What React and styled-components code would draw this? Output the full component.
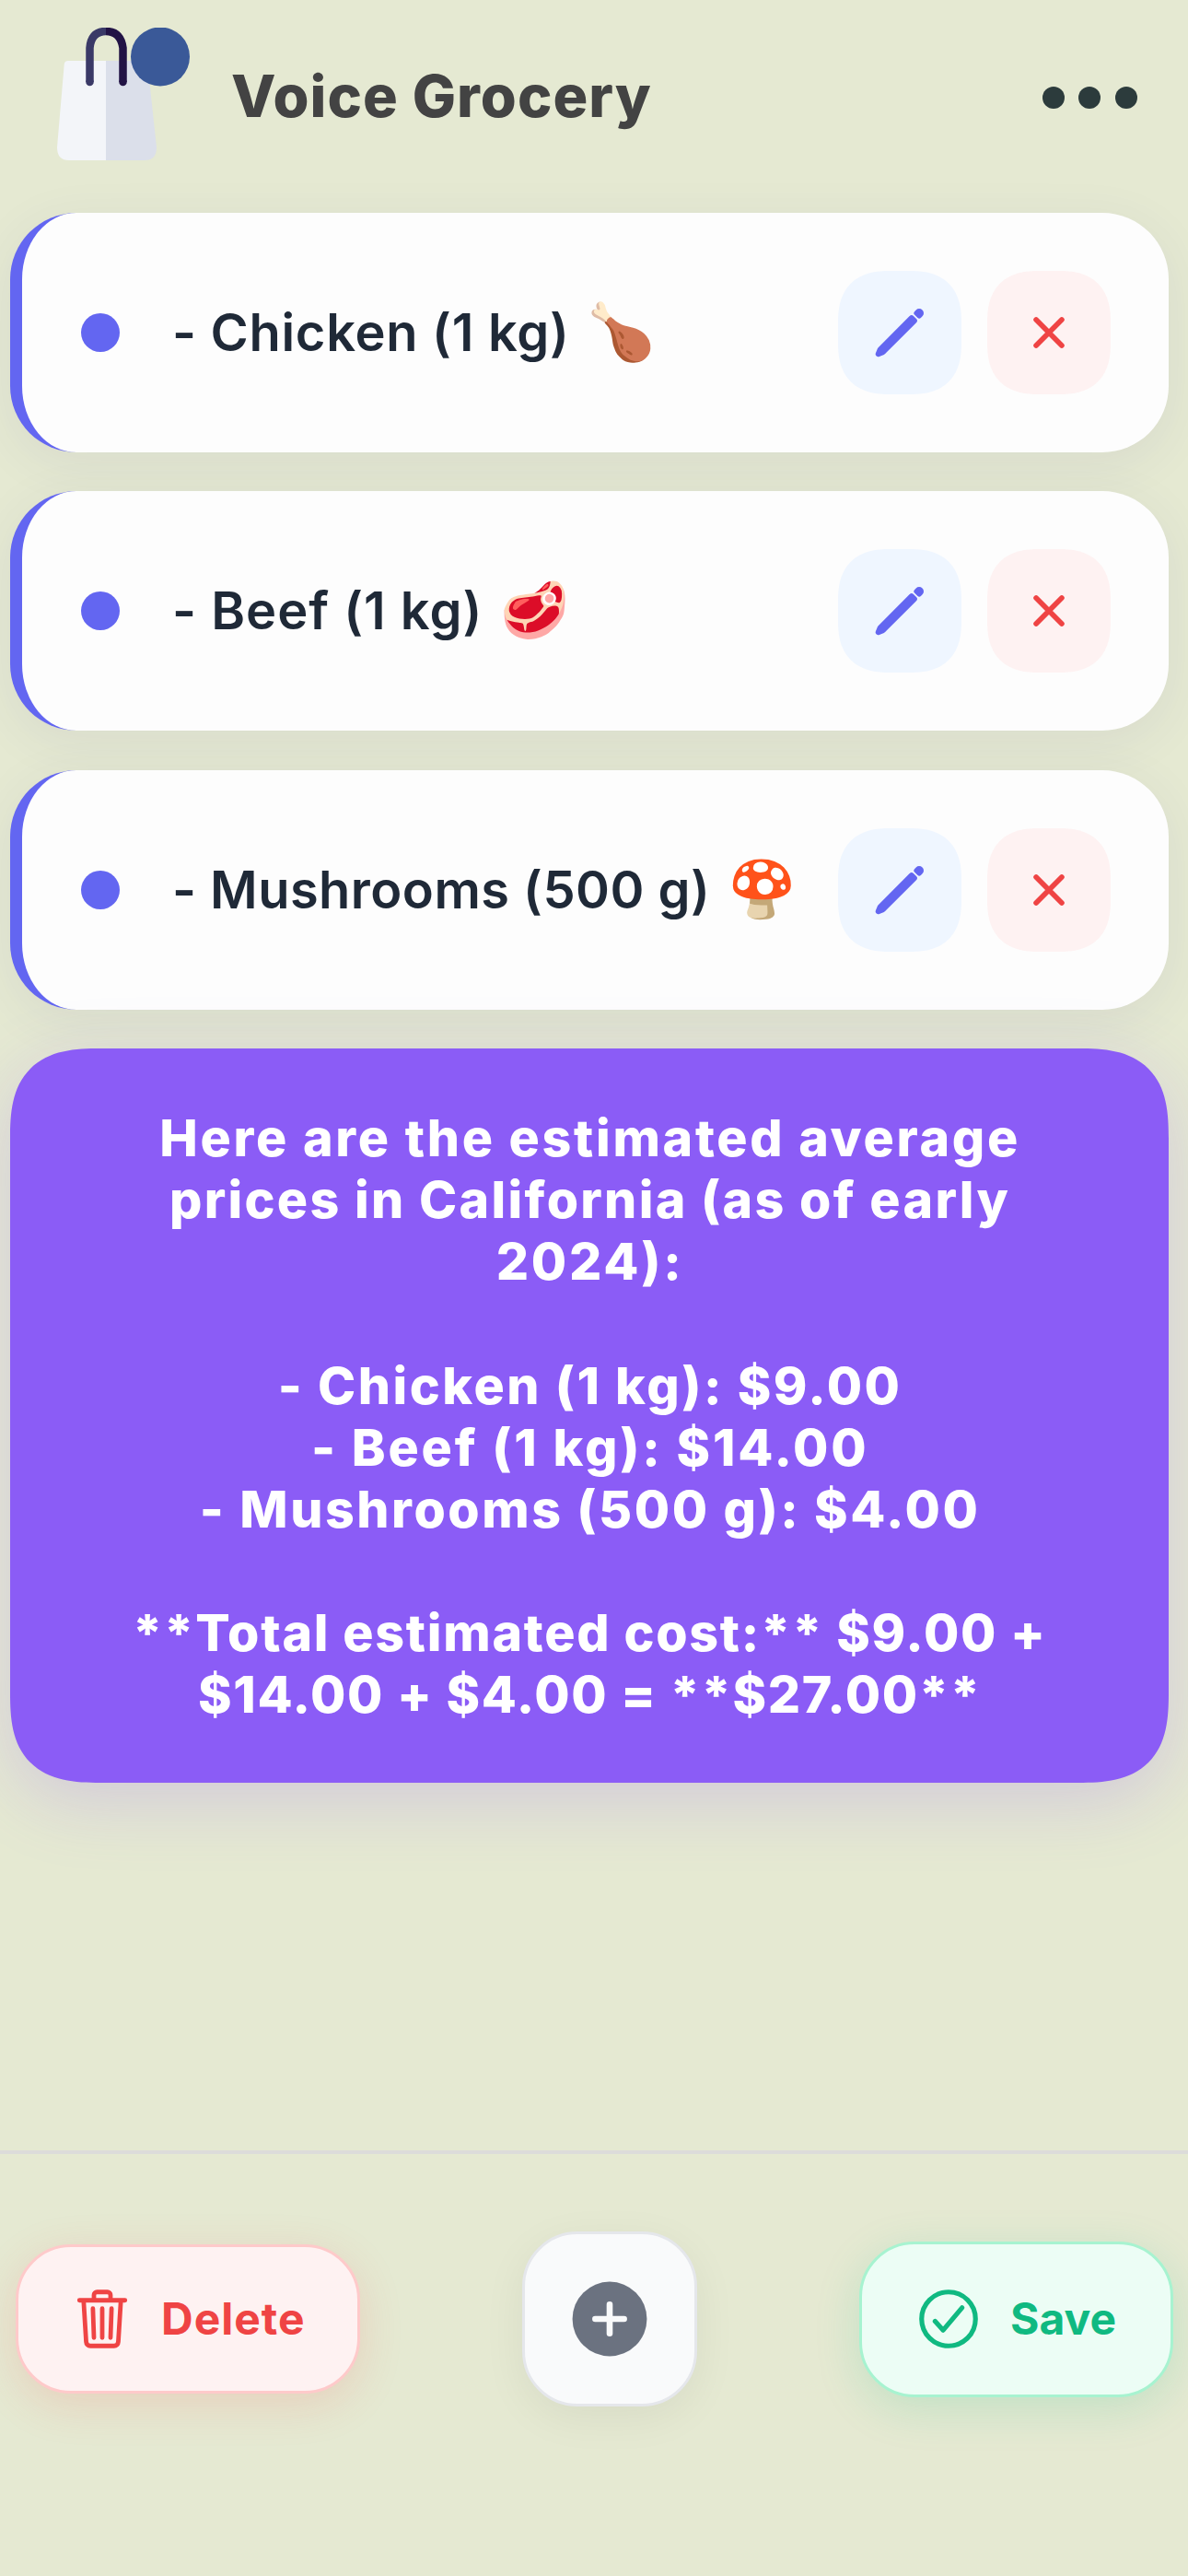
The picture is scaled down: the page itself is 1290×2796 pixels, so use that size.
import React from 'react';
import styled, { createGlobalStyle } from 'styled-components';

const GlobalStyle = createGlobalStyle`
  *, *::before, *::after { box-sizing: border-box; }
  body {
    margin: 0;
    background: #e5e9d2;
    font-family: Inter, "Liberation Sans", sans-serif;
  }
  button { font: inherit; margin: 0; }
  svg { display: block; flex: none; }
`;

const Screen = styled.div`
  display: flex;
  flex-direction: column;
  width: 1290px;
  height: 2796px;
  overflow: hidden;
  background: #e5e9d2;
`;

const Header = styled.header`
  display: flex;
  align-items: center;
  flex: none;
  height: 212px;
  padding: 0 55px 0 62px;
`;

const Logo = styled.svg`
  width: 146px;
  height: 146px;
  margin-bottom: 7px;
`;

const Title = styled.h1`
  margin: 0 auto 3px 43px;
  color: #434343;
  font-size: 63px;
  font-weight: 800;
  line-height: 1.2;
  letter-spacing: 1.05px;
`;

const MenuButton = styled.button`
  display: flex;
  gap: 15.6px;
  padding: 0;
  border: 0;
  background: none;
`;

const MenuDot = styled.span`
  width: 24px;
  height: 24px;
  border-radius: 50%;
  background: #2c3b3c;
`;

const Content = styled.main`
  flex: 1;
  display: flex;
  flex-direction: column;
  gap: 42.4px;
  padding: 19px 21px 0 11px;
`;

const ItemCard = styled.article`
  display: flex;
  align-items: center;
  flex: none;
  height: 260px;
  padding: 0 63px 0 64px;
  border-left: 13px solid #6366f1;
  border-radius: 72px;
  background: #fdfdfd;
  box-shadow: 0 12px 54px rgba(70, 70, 140, 0.08);
`;

const Bullet = styled.span`
  flex: none;
  width: 42px;
  height: 42px;
  border-radius: 50%;
  background: #6366f1;
`;

const ItemName = styled.span`
  flex: 1;
  display: flex;
  align-items: center;
  margin-left: 57px;
  color: #1f2937;
  font-size: 56px;
  font-weight: 600;
  line-height: 76px;
  letter-spacing: ${(p) => p.$tracking}px;
  white-space: pre;
`;

const Emoji = styled.span`
  margin-left: 19px;
  font-family: "Noto Color Emoji", sans-serif;
  font-size: 60px;
  font-weight: 400;
  letter-spacing: 0;
`;

const Actions = styled.div`
  display: flex;
  gap: 28px;
`;

const ActionButton = styled.button`
  display: flex;
  align-items: center;
  justify-content: center;
  width: 134px;
  height: 134px;
  padding: 0;
  border: 0;
  border-radius: 48px;
  color: ${(p) => (p.$danger ? '#ef4444' : '#6366f1')};
  background: ${(p) => (p.$danger ? '#fef2f2' : '#eff6ff')};

  @supports (corner-shape: superellipse(1.3)) {
    border-radius: 56px;
    corner-shape: superellipse(1.3);
  }
`;

const PriceCard = styled.section`
  flex: none;
  height: 797px;
  padding: 63px 0;
  border-radius: 74px;
  background: #8b5cf6;
  box-shadow: 0 20px 76px rgba(139, 92, 246, 0.22);
  color: #fff;
  font-size: 55.5px;
  font-weight: 800;
  line-height: 67.1px;
  text-align: center;
  white-space: pre;

  @supports (corner-shape: superellipse(1.3)) {
    border-radius: 98px;
    corner-shape: superellipse(1.45);
  }
`;

const PriceLine = styled.div`
  height: 67.1px;
  letter-spacing: ${(p) => p.$tracking}px;
  text-indent: ${(p) => p.$tracking / 2}px;
`;

const Footer = styled.footer`
  display: flex;
  align-items: center;
  justify-content: space-between;
  flex: none;
  height: 462px;
  padding: 0 16px 100px 17px;
  border-top: 4px solid #dcdcda;
`;

const tones = {
  red: { fg: '#ef4444', bg: '#fef2f2', line: '#fecaca', glow: 'rgba(239, 68, 68, 0.15)' },
  green: { fg: '#10b981', bg: '#ecfdf5', line: '#a7f3d0', glow: 'rgba(16, 185, 129, 0.17)' },
  gray: { fg: '#6b7280', bg: '#f9fafb', line: '#e5e7eb', glow: 'rgba(0, 0, 0, 0.06)' },
};

const FooterButton = styled.button`
  display: flex;
  align-items: center;
  justify-content: ${(p) => (p.$tone === 'gray' ? 'center' : 'flex-start')};
  gap: 28px;
  width: ${(p) => p.$width}px;
  height: ${(p) => p.$height}px;
  padding: 0 0 0 ${(p) => (p.$tone === 'gray' ? 0 : 55)}px;
  border: 3.5px solid ${(p) => tones[p.$tone].line};
  border-radius: 60px;
  background: ${(p) => tones[p.$tone].bg};
  color: ${(p) => tones[p.$tone].fg};
  box-shadow: 0 12px 48px ${(p) => tones[p.$tone].glow};
`;

const ButtonLabel = styled.span`
  margin-bottom: 1px;
  font-size: 48px;
  font-weight: 700;
  line-height: 58px;
  letter-spacing: ${(p) => p.$tracking || 0}px;
`;

const strokeProps = {
  fill: 'none',
  stroke: 'currentColor',
  strokeWidth: 34,
  strokeLinecap: 'round',
  strokeLinejoin: 'round',
};

const BagLogo = () => (
  <Logo viewBox="0 0 146 146" aria-hidden="true">
    <path d="M53 36H12q-4 0-4.300 4L0 130q0 14 13 14h40z" fill="#f3f5f9" />
    <path d="M53 36h41q4 0 4.300 4L108 130q0 14-13 14H53z" fill="#dbdfea" />
    <path d="M35.500 59V22Q37 4 53 4" fill="none" stroke="#3a3967" strokeWidth="8.500" />
    <path d="M53 4Q69 4 71.500 22V59" fill="none" stroke="#221345" strokeWidth="8.500" />
    <circle cx="35.500" cy="59" r="4.250" fill="#3a3967" />
    <circle cx="71.500" cy="59" r="4.250" fill="#221345" />
    <circle cx="112" cy="31.500" r="32" fill="#3a5998" />
  </Logo>
);

const PencilIcon = () => (
  <svg width="64" height="64" viewBox="0 0 512 512">
    <path
      d="M358.620 129.280L86.490 402.080 70 442l39.920-16.490 272.800-272.130z"
      fill="currentColor" stroke="currentColor" strokeWidth="48" strokeLinecap="round" strokeLinejoin="round"
    />
    <path
      d="M413.070 74.840l-11.790 11.780 24.100 24.100 11.790-11.790a16.510 16.510 0 000-23.340l-.75-.75a16.510 16.510 0 00-23.350 0z"
      fill="currentColor" stroke="currentColor" strokeWidth="44" strokeLinecap="round" strokeLinejoin="round"
    />
  </svg>
);

const CloseIcon = () => (
  <svg width="66" height="66" viewBox="0 0 512 512">
    <path d="M364 364L148 148M364 148L148 364" {...strokeProps} strokeWidth={44} />
  </svg>
);

const TrashIcon = () => (
  <svg width="72" height="72" viewBox="0 0 512 512">
    <path
      d="M112 112l20 320c.95 18.490 14.400 32 32 32h184c17.670 0 30.870-13.510 32-32l20-320M80 112h352M192 112V72a23.930 23.930 0 0124-24h80a23.930 23.930 0 0124 24v40M256 176v224M184 176l8 224M328 176l-8 224"
      {...strokeProps}
    />
  </svg>
);

const CheckCircleIcon = () => (
  <svg width="78" height="78" viewBox="0 0 512 512">
    <circle cx="256" cy="256" r="192" {...strokeProps} />
    <path d="M352 176L217.600 336 160 272" {...strokeProps} />
  </svg>
);

const AddCircleIcon = () => (
  <svg width="100" height="100" viewBox="0 0 512 512">
    <circle cx="256" cy="256" r="207" fill="currentColor" />
    <path d="M256 176v160M176 256h160" {...strokeProps} stroke="#f9fafb" />
  </svg>
);

const items = [
  { name: '- Chicken (1 kg)', emoji: '🍗', tracking: 0.7 },
  { name: '- Beef (1 kg)', emoji: '🥩', tracking: 1 },
  { name: '- Mushrooms (500 g)', emoji: '🍄', tracking: 0.45 },
];

const priceLines = [
  ['Here are the estimated average', 2.7],
  ['prices in California (as of early', 2.3],
  ['2024):', 2.8],
  ['', 0],
  ['- Chicken (1 kg): $9.00', 2.5],
  ['- Beef (1 kg): $14.00', 2.8],
  ['- Mushrooms (500 g): $4.00', 2.55],
  ['', 0],
  ['**Total estimated cost:** $9.00 +', 1.75],
  ['$14.00 + $4.00 = **$27.00**', 1.65],
];

export default function App() {
  return (
    <Screen>
      <GlobalStyle />
      <Header>
        <BagLogo />
        <Title>Voice Grocery</Title>
        <MenuButton aria-label="More options">
          <MenuDot />
          <MenuDot />
          <MenuDot />
        </MenuButton>
      </Header>
      <Content>
        {items.map((item) => (
          <ItemCard key={item.name}>
            <Bullet />
            <ItemName $tracking={item.tracking}>
              {item.name}
              <Emoji>{item.emoji}</Emoji>
            </ItemName>
            <Actions>
              <ActionButton aria-label="Edit">
                <PencilIcon />
              </ActionButton>
              <ActionButton $danger aria-label="Remove">
                <CloseIcon />
              </ActionButton>
            </Actions>
          </ItemCard>
        ))}
        <PriceCard>
          {priceLines.map(([text, tracking], i) => (
            <PriceLine key={i} $tracking={tracking}>{text}</PriceLine>
          ))}
        </PriceCard>
      </Content>
      <Footer>
        <FooterButton $tone="red" $width={374} $height={162}>
          <TrashIcon />
          <ButtonLabel $tracking={1}>Delete</ButtonLabel>
        </FooterButton>
        <FooterButton $tone="gray" $width={190} $height={190} aria-label="Add">
          <AddCircleIcon />
        </FooterButton>
        <FooterButton $tone="green" $width={341} $height={169}>
          <CheckCircleIcon />
          <ButtonLabel>Save</ButtonLabel>
        </FooterButton>
      </Footer>
    </Screen>
  );
}
